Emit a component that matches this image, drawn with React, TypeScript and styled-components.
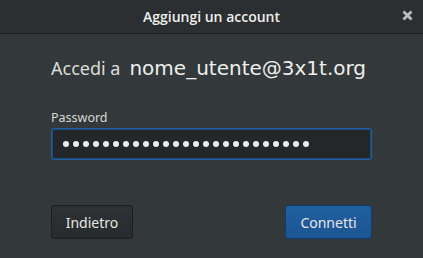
import React from "react";
import styled, { createGlobalStyle } from "styled-components";

const GlobalStyle = createGlobalStyle`
  html, body {
    margin: 0;
    padding: 0;
    background: #33393b;
  }
  body {
    font-family: "Noto Sans", "Open Sans", sans-serif;
    color: #eeeeec;
  }
`;

const Window = styled.div`
  width: 423px;
  height: 258px;
  display: flex;
  flex-direction: column;
  background: #33393b;
  overflow: hidden;
`;

const HeaderBar = styled.div`
  height: 33px;
  flex: none;
  display: flex;
  align-items: center;
  justify-content: center;
  position: relative;
  background: #2b2f31;
  border-bottom: 1px solid #1b1f20;
`;

const Title = styled.div`
  font-family: "Open Sans", "Noto Sans", sans-serif;
  font-size: 14px;
  font-weight: 600;
  color: #eeeeec;
`;

const CloseButton = styled.div`
  position: absolute;
  right: 10px;
  top: 9px;
  width: 12px;
  height: 12px;
  display: flex;
  align-items: center;
  justify-content: center;
`;

const Body = styled.div`
  flex: 1;
  display: flex;
  flex-direction: column;
  padding: 22px 51px 0 51px;
`;

const Heading = styled.div`
  display: flex;
  align-items: baseline;
  gap: 9px;
  height: 26px;
`;

const Lead = styled.span`
  font-size: 18px;
  color: #dcdcd8;
`;

const Email = styled.span`
  font-family: "DejaVu Sans", sans-serif;
  font-size: 20px;
  color: #eeeeec;
`;

const Label = styled.div`
  margin-top: 27px;
  font-size: 12.5px;
  color: #d8d8d4;
  height: 17px;
`;

const Field = styled.div`
  margin-top: 2px;
  width: 321px;
  height: 32px;
  box-sizing: border-box;
  border: 1px solid #215d9c;
  box-shadow: inset 0 0 0 1px #1b4a7c;
  border-radius: 2px;
  background: #232729;
  display: flex;
  align-items: center;
  padding-left: 11px;
  gap: 4px;
`;

const Dot = styled.span`
  width: 6px;
  height: 6px;
  border-radius: 50%;
  background: #eeeeec;
  flex: none;
`;

const Actions = styled.div`
  margin-top: 45px;
  display: flex;
  justify-content: space-between;
  width: 321px;
`;

const Button = styled.div<{ $primary?: boolean; $width: number }>`
  width: ${(p) => p.$width}px;
  height: 34px;
  box-sizing: border-box;
  display: flex;
  align-items: center;
  justify-content: center;
  border-radius: 3px;
  font-size: 14px;
  color: #e6e6e3;
  border: 1px solid ${(p) => (p.$primary ? "#0f3b71" : "#1b1f20")};
  background: ${(p) =>
    p.$primary
      ? "linear-gradient(#2160a0, #1c5592)"
      : "linear-gradient(#2d3234, #272b2d)"};
`;

const App: React.FC = () => {
  const dots = Array.from({ length: 25 });
  return (
    <>
      <GlobalStyle />
      <Window>
        <HeaderBar>
          <Title>Aggiungi un account</Title>
          <CloseButton>
            <svg width="11" height="11" viewBox="0 0 11 11">
              <path
                d="M1.5 1.5 L9.5 9.5 M9.5 1.5 L1.5 9.5"
                stroke="#bcbdbc"
                strokeWidth="2.8"
              />
            </svg>
          </CloseButton>
        </HeaderBar>
        <Body>
          <Heading>
            <Lead>Accedi a</Lead>
            <Email>nome_utente@3x1t.org</Email>
          </Heading>
          <Label>Password</Label>
          <Field>
            {dots.map((_, i) => (
              <Dot key={i} />
            ))}
          </Field>
          <Actions>
            <Button $width={82}>Indietro</Button>
            <Button $primary $width={87}>
              Connetti
            </Button>
          </Actions>
        </Body>
      </Window>
    </>
  );
};

export default App;
